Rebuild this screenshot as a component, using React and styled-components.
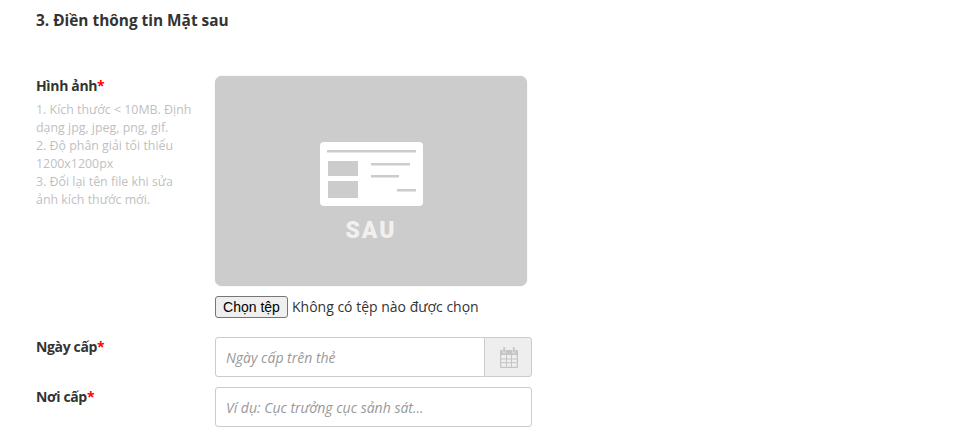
import styled, { createGlobalStyle } from 'styled-components';

const GlobalStyle = createGlobalStyle`
  html, body {
    margin: 0;
    background: #fff;
    font-family: 'Open Sans', 'Noto Sans', sans-serif;
    color: #333;
  }
  * {
    box-sizing: border-box;
  }
`;

const Page = styled.div`
  width: 966px;
  height: 439px;
  overflow: hidden;
  padding: 10px 0 0 36px;
`;

const Title = styled.h3`
  margin: 0 0 44px;
  height: 22px;
  font-size: 15.4px;
  line-height: 22px;
  font-weight: 700;
  color: #333;
`;

const Row = styled.div`
  display: grid;
  grid-template-columns: 179px 317px;
  margin-bottom: ${(p) => p.$gap || 10}px;
`;

const Label = styled.label`
  display: block;
  font-size: 14px;
  line-height: 20px;
  font-weight: 700;
  letter-spacing: -0.35px;
  color: #333;
`;

const Required = styled.span`
  color: #f00;
`;

const Hint = styled.div`
  width: 160px;
  margin-top: 5px;
  font-size: 12.4px;
  line-height: 18px;
  color: #bfbfbf;
`;

const Preview = styled.div`
  width: 312px;
  height: 210px;
  background: #ccc;
  border-radius: 7px;
  box-shadow: 0 0 1px #bbb;
  display: flex;
  flex-direction: column;
  align-items: center;
  padding-top: 66px;
`;

const PreviewLabel = styled.div`
  margin-top: 12px;
  font-family: Roboto, 'Liberation Sans', sans-serif;
  font-size: 23px;
  line-height: 26px;
  font-weight: 900;
  letter-spacing: 2px;
  color: #f0f0f0;
`;

const FileRow = styled.div`
  display: flex;
  align-items: center;
  height: 22px;
  margin-top: 10px;
`;

const FileButton = styled.button`
  width: 73px;
  height: 22px;
  padding: 0;
  background: #efefef;
  border: 1px solid #767676;
  border-radius: 3px;
  font-family: 'Liberation Sans', Arial, sans-serif;
  font-size: 14px;
  color: #000;
`;

const FileName = styled.span`
  margin: -1px 0 0 4px;
  font-family: 'Open Sans', 'Noto Sans', sans-serif;
  font-size: 14px;
  color: #333;
`;

const InputGroup = styled.div`
  display: flex;
  width: 317px;
  height: 40px;
`;

const TextInput = styled.input`
  flex: 1;
  min-width: 0;
  height: 40px;
  padding: 0 10px;
  border: 1px solid #ccc;
  border-radius: ${(p) => (p.$grouped ? '3px 0 0 3px' : '3px')};
  background: #fff;
  font-family: inherit;
  font-size: 14px;
  outline: none;
  &::placeholder {
    color: #999;
    font-style: italic;
    opacity: 1;
  }
`;

const Addon = styled.div`
  width: 48px;
  display: flex;
  align-items: center;
  justify-content: center;
  padding-left: 1px;
  background: #eee;
  border: 1px solid #ccc;
  margin-left: -1px;
  border-radius: 0 3px 3px 0;
`;

const CardIcon = () => (
  <svg width="103" height="64" viewBox="0 0 103 64">
    <rect width="103" height="64" rx="4" fill="#fff" />
    <rect x="7" y="8" width="89" height="2.5" fill="#ccc" />
    <rect x="8" y="19" width="30" height="15" fill="#ccc" />
    <rect x="8" y="39" width="30" height="17" fill="#ccc" />
    <rect x="51" y="21" width="39" height="2.5" fill="#ccc" />
    <rect x="51" y="33" width="28" height="2.5" fill="#ccc" />
    <rect x="77" y="47" width="19" height="2.5" fill="#ccc" />
  </svg>
);

const CalendarIcon = () => (
  <svg width="18" height="21" viewBox="0 0 18 21">
    <rect x="0" y="3" width="18" height="18" rx="1" fill="#c4c4c4" />
    <rect x="3" y="0" width="2.5" height="6" fill="#c4c4c4" stroke="#eee" strokeWidth="0.6" />
    <rect x="12.5" y="0" width="2.5" height="6" fill="#c4c4c4" stroke="#eee" strokeWidth="0.6" />
    <path d="M1.2 8h15.6v11.8h-15.6z" fill="#eee" />
    <path d="M6.5 8v11.8M11.5 8v11.8M1.2 12h15.6M1.2 15.7h15.6" stroke="#c4c4c4" strokeWidth="1" fill="none" />
  </svg>
);

const App = () => (
  <>
    <GlobalStyle />
    <Page>
      <Title>3. Điền thông tin Mặt sau</Title>
      <Row $gap={19}>
        <div>
          <Label>
            Hình ảnh<Required>*</Required>
          </Label>
          <Hint>
            1. Kích thước &lt; 10MB. Định dạng jpg, jpeg, png, gif.
            <br />
            2. Độ phân giải tối thiểu 1200x1200px
            <br />
            3. Đổi lại tên file khi sửa ảnh kích thước mới.
          </Hint>
        </div>
        <div>
          <Preview>
            <CardIcon />
            <PreviewLabel>SAU</PreviewLabel>
          </Preview>
          <FileRow>
            <FileButton type="button">Chọn tệp</FileButton>
            <FileName>Không có tệp nào được chọn</FileName>
          </FileRow>
        </div>
      </Row>
      <Row>
        <Label>
          Ngày cấp<Required>*</Required>
        </Label>
        <InputGroup>
          <TextInput $grouped placeholder="Ngày cấp trên thẻ" />
          <Addon>
            <CalendarIcon />
          </Addon>
        </InputGroup>
      </Row>
      <Row>
        <Label>
          Nơi cấp<Required>*</Required>
        </Label>
        <InputGroup>
          <TextInput placeholder="Ví dụ: Cục trưởng cục sảnh sát..." />
        </InputGroup>
      </Row>
    </Page>
  </>
);

export default App;
